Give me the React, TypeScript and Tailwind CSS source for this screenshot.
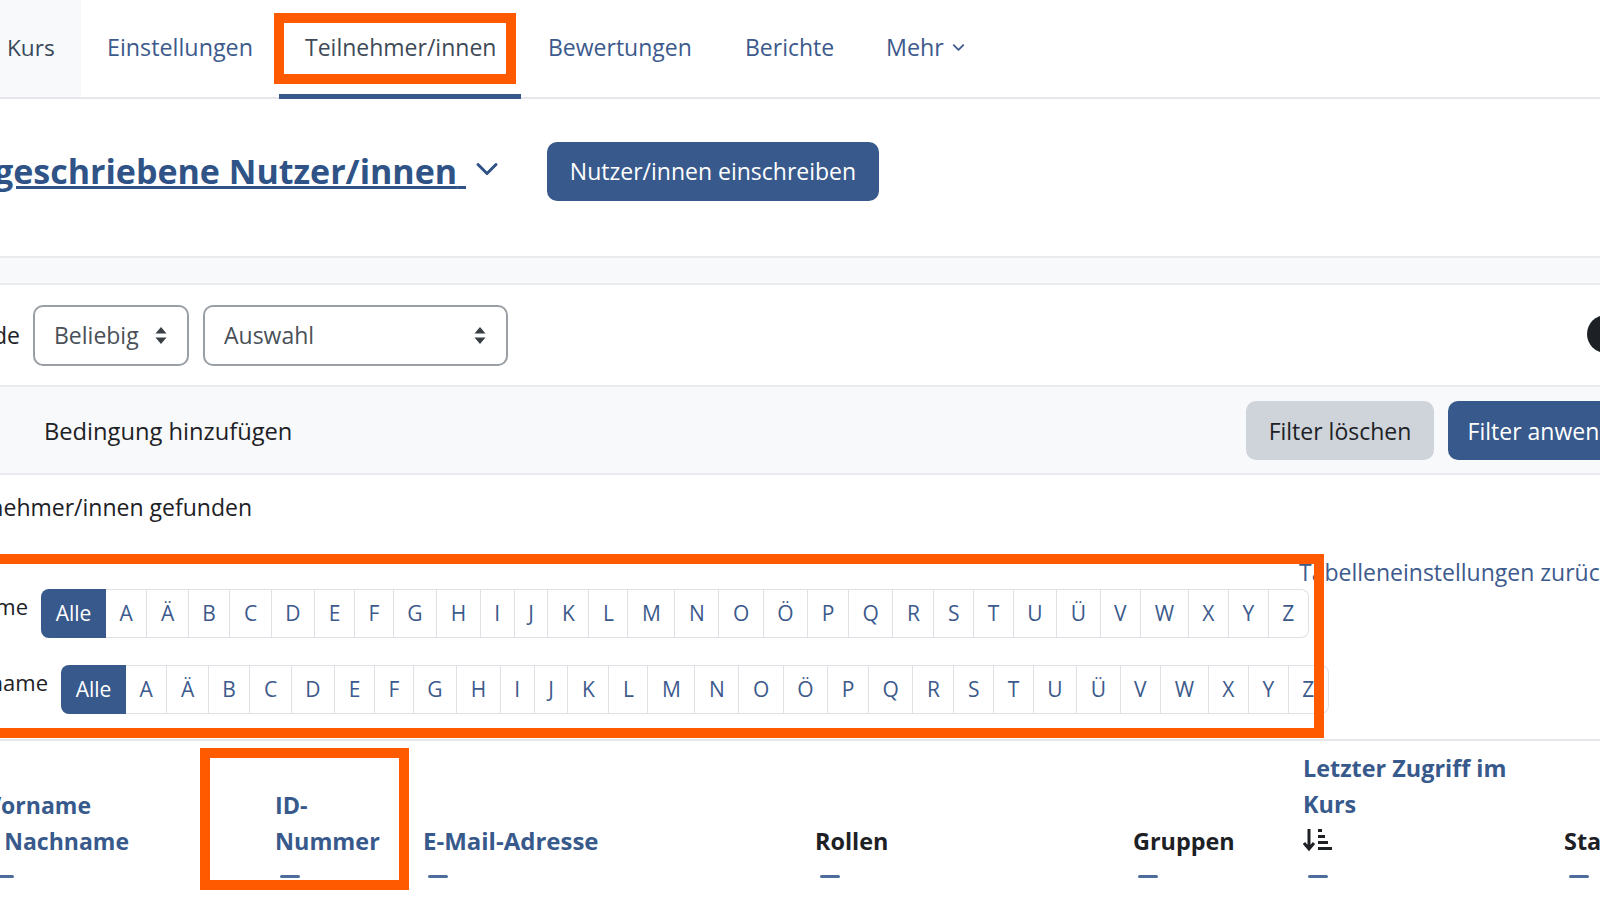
import { ChevronDown } from 'lucide-react';

const LETTERS = ['A', 'Ä', 'B', 'C', 'D', 'E', 'F', 'G', 'H', 'I', 'J', 'K', 'L', 'M', 'N', 'O', 'Ö', 'P', 'Q', 'R', 'S', 'T', 'U', 'Ü', 'V', 'W', 'X', 'Y', 'Z'];

function SelectArrows() {
  return (
    <svg width="12" height="17" viewBox="0 0 12 17" className="shrink-0">
      <path d="M6 0 L11.5 6.5 H0.5 Z" fill="#3a3f45" />
      <path d="M6 17 L11.5 10.5 H0.5 Z" fill="#3a3f45" />
    </svg>
  );
}

function SortIcon() {
  return (
    <svg width="30" height="24" viewBox="0 0 30 24">
      <path d="M6 1 V20 M1 15 L6 21 L11 15" fill="none" stroke="#1d2125" strokeWidth="3" />
      <rect x="15" y="1" width="4" height="3" fill="#1d2125" />
      <rect x="15" y="7" width="7" height="3" fill="#1d2125" />
      <rect x="15" y="13" width="10" height="3" fill="#1d2125" />
      <rect x="15" y="19" width="14" height="3" fill="#1d2125" />
    </svg>
  );
}

function InitialsBar({ label, labelWidth, leading }: { label: string; labelWidth: string; leading: string }) {
  return (
    <div className="flex items-start h-[49px]">
      <div className={`flex justify-end overflow-hidden whitespace-nowrap text-[22px] text-[#1d2125] ${labelWidth} ${leading}`}>
        {label}
      </div>
      <div className="flex h-full ml-[13px] text-[21px] text-[#3d5a8c]">
        <div className="w-[65px] flex items-center justify-center rounded-l-[8px] bg-[#37598b] text-white">Alle</div>
        {LETTERS.map((l) => (
          <div key={l} className="px-[13.55px] flex items-center justify-center border border-l-0 border-[#dee2e6] last:rounded-r-[8px]">
            {l}
          </div>
        ))}
      </div>
    </div>
  );
}

function Dash() {
  return <div className="w-[20px] h-[3px] mt-[16px] ml-[5px] rounded-full bg-[#4f6d9c]" />;
}

export default function App() {
  return (
    <div className="relative w-[1600px] h-[900px] overflow-hidden bg-white text-[#1d2125] font-['Open_Sans','Noto_Sans',sans-serif] text-[23px]">
      {/* タブ */}
      <nav className="flex items-stretch h-[99px] pb-[2px] border-b-2 border-[#e5e7ea] text-[23px] text-[#3d5a8c]">
        <div className="w-[81px] -mb-[2px] pb-[2px] pl-[7px] flex items-center bg-[#f8f9fa] text-[22.6px] text-[#39495a]">Kurs</div>
        <div className="w-[198px] pl-[26px] flex items-center text-[23.3px]">Einstellungen</div>
        <div className="w-[242px] pl-[26px] flex items-center border-b-[5px] border-[#37598b] -mb-[4px] text-[#3e4a57]">Teilnehmer/innen</div>
        <div className="w-[198px] pl-[27px] flex items-center">Bewertungen</div>
        <div className="w-[141px] pl-[26px] flex items-center">Berichte</div>
        <div className="pl-[26px] flex items-center gap-[5px] text-[23.3px]">
          Mehr
          <ChevronDown className="w-[19px] h-[19px]" strokeWidth={2.25} />
        </div>
      </nav>

      {/* 見出し */}
      <div className="flex items-center h-[157px] pb-[12px]">
        <a className="w-[466px] shrink-0 flex justify-end overflow-hidden whitespace-pre text-[34px] font-bold text-[#2f5386] underline">
          Eingeschriebene Nutzer/innen{' '}
        </a>
        <ChevronDown className="w-[36px] h-[36px] ml-[3px] -mt-[5px] text-[#2f5386]" strokeWidth={2} />
        <button className="ml-[42px] w-[332px] h-[59px] rounded-[10px] bg-[#37598b] text-white">Nutzer/innen einschreiben</button>
      </div>

      <div className="h-[29px] bg-[#f8f9fa] border-y-2 border-[#e9ebee]" />

      {/* フィルター */}
      <div className="flex items-center h-[100px]">
        <div className="w-[20px] flex justify-end overflow-hidden whitespace-nowrap">Jede</div>
        <div className="ml-[13px] w-[156px] h-[61px] pl-[19px] pr-[20px] flex items-center justify-between rounded-[10px] border-2 border-[#9a9fa5] text-[#495057]">
          Beliebig
          <SelectArrows />
        </div>
        <div className="ml-[14px] w-[305px] h-[61px] pl-[19px] pr-[20px] flex items-center justify-between rounded-[10px] border-2 border-[#9a9fa5] text-[#495057]">
          Auswahl
          <SelectArrows />
        </div>
        <div className="ml-auto -mr-[25px] -mt-[3px] w-[38px] h-[38px] rounded-full bg-[#1d2125]" />
      </div>

      <div className="flex items-center h-[90px] pl-[44px] bg-[#f8f9fa] border-y-2 border-[#e9ebee]">
        <span className="mt-[3px] text-[23.7px]">Bedingung hinzufügen</span>
        <button className="ml-auto w-[188px] h-[59px] pt-[2px] rounded-[10px] bg-[#ced4da]">Filter löschen</button>
        <button className="ml-[14px] -mr-[60px] w-[212px] h-[59px] pt-[2px] rounded-[10px] bg-[#37598b] text-white whitespace-nowrap">Filter anwenden</button>
      </div>

      {/* 件数 */}
      <div className="flex justify-end w-[252px] h-[65px] items-center overflow-hidden whitespace-nowrap">
        1 Teilnehmer/innen gefunden
      </div>

      <div className="h-[49px] pt-[18px] pl-[1299px] whitespace-nowrap leading-[28px] text-[#3d5a8c]">Tabelleneinstellungen zurücksetzen</div>

      <InitialsBar label="Vorname" labelWidth="w-[28px]" leading="leading-[34px]" />
      <div className="h-[27px]" />
      <InitialsBar label="Nachname" labelWidth="w-[48px]" leading="leading-[35px]" />

      {/* テーブルヘッダー */}
      <div className="mt-[25px] border-t-2 border-[#e5e7ea] flex items-start h-[162px] pt-[4px] font-bold text-[23.4px] text-[#37598b] leading-[36px]">
        <div className="w-[275px] shrink-0 h-full flex flex-col justify-end text-[23px]">
          <div className="w-[91px] flex justify-end overflow-hidden whitespace-nowrap">Vorname</div>
          <div className="w-[129px] flex justify-end overflow-hidden whitespace-pre">/ Nachname</div>
          <div className="-ml-[11px]"><Dash /></div>
          <div className="h-[23px]" />
        </div>
        <div className="w-[148px] shrink-0 h-full flex flex-col justify-end">
          <div>ID-</div>
          <div>Nummer</div>
          <Dash />
          <div className="h-[23px]" />
        </div>
        <div className="w-[392px] shrink-0 h-full flex flex-col justify-end">
          <div className="text-[24px]">E-Mail-Adresse</div>
          <Dash />
          <div className="h-[23px]" />
        </div>
        <div className="w-[318px] shrink-0 h-full flex flex-col justify-end text-[#1d2125]">
          <div>Rollen</div>
          <Dash />
          <div className="h-[23px]" />
        </div>
        <div className="w-[170px] shrink-0 h-full flex flex-col justify-end text-[#1d2125]">
          <div>Gruppen</div>
          <Dash />
          <div className="h-[23px]" />
        </div>
        <div className="w-[261px] shrink-0 h-full flex flex-col justify-end">
          <div className="whitespace-nowrap">Letzter Zugriff im</div>
          <div>Kurs</div>
          <div className="h-[36px] flex items-center"><SortIcon /></div>
          <div className="h-px" />
          <Dash />
          <div className="h-[23px]" />
        </div>
        <div className="shrink-0 h-full flex flex-col justify-end text-[#1d2125] whitespace-nowrap">
          <div>Status</div>
          <Dash />
          <div className="h-[23px]" />
        </div>
      </div>

      {/* 注釈の枠 */}
      <div className="absolute left-[274px] top-[13px] w-[242px] h-[71px] border-[10px] border-[#ff5a00]" />
      <div className="absolute -left-[10px] top-[554px] w-[1334px] h-[184px] border-[10px] border-[#ff5a00]" />
      <div className="absolute left-[200px] top-[748px] w-[209px] h-[142px] border-[10px] border-[#ff5a00]" />
    </div>
  );
}
